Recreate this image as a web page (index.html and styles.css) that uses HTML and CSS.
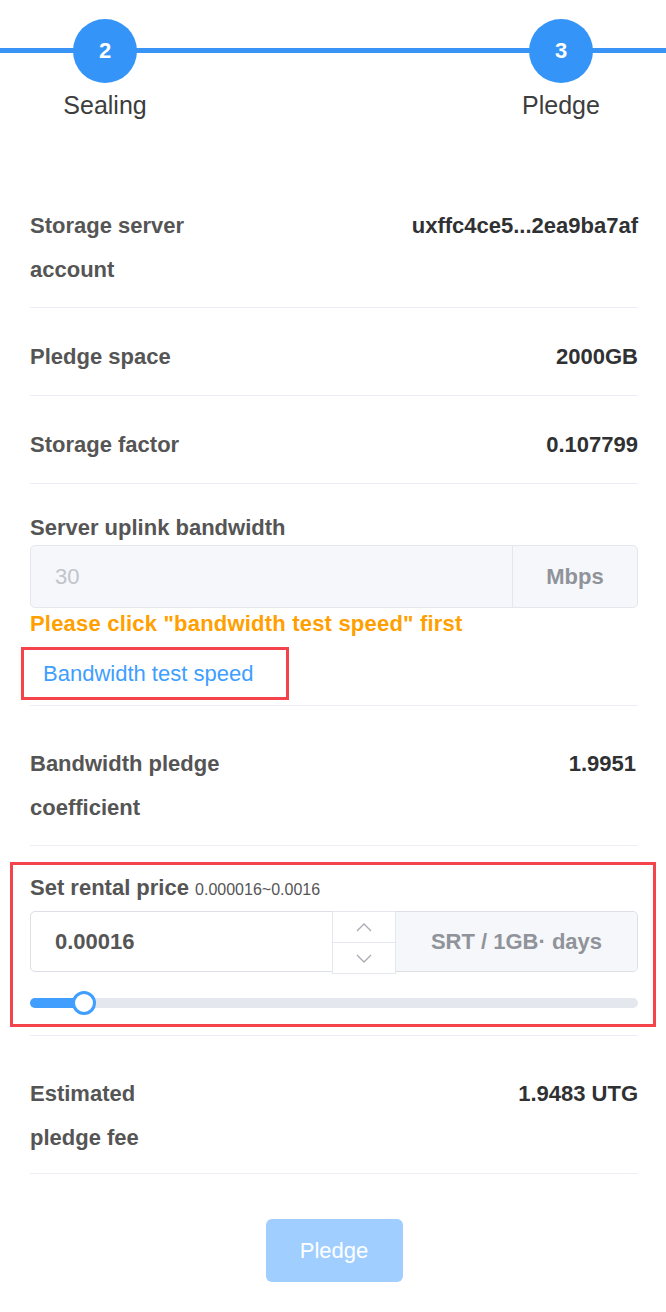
FILE: index.html
```html
<!DOCTYPE html>
<html lang="en">
<head>
<meta charset="utf-8">
<title>Pledge</title>
<link rel="stylesheet" href="styles.css">
</head>
<body>
<div class="page">
  <div class="steps">
    <div class="step">
      <div class="step-dot">2</div>
      <div class="step-name">Sealing</div>
    </div>
    <div class="step">
      <div class="step-dot">3</div>
      <div class="step-name">Pledge</div>
    </div>
  </div>

  <div class="content">
    <div class="row row-double">
      <div class="label">Storage server<br>account</div>
      <div class="value">uxffc4ce5...2ea9ba7af</div>
    </div>
    <div class="row row-single">
      <div class="label">Pledge space</div>
      <div class="value">2000GB</div>
    </div>
    <div class="row row-single">
      <div class="label">Storage factor</div>
      <div class="value">0.107799</div>
    </div>

    <div class="row row-bandwidth">
      <div class="field-label">Server uplink bandwidth</div>
      <div class="input-group disabled">
        <div class="input-main">30</div>
        <div class="input-append append-mbps">Mbps</div>
      </div>
      <div class="warning">Please click "bandwidth test speed" first</div>
      <div class="test-btn">Bandwidth test speed</div>
    </div>

    <div class="row row-double">
      <div class="label">Bandwidth pledge<br>coefficient</div>
      <div class="value value-coef">1.9951</div>
    </div>

    <div class="row row-rental">
      <div class="rental-box">
        <div class="field-label rental-label">Set rental price <span class="range">0.000016~0.0016</span></div>
        <div class="input-group rental-input">
          <div class="input-main number">0.00016</div>
          <div class="spin">
            <div class="spin-btn">
              <svg width="16" height="9" viewBox="0 0 16 9"><polyline points="1,8 8,1 15,8" fill="none" stroke="#a8abb2" stroke-width="1.3"/></svg>
            </div>
            <div class="spin-btn">
              <svg width="16" height="9" viewBox="0 0 16 9"><polyline points="1,1 8,8 15,1" fill="none" stroke="#a8abb2" stroke-width="1.3"/></svg>
            </div>
          </div>
          <div class="input-append append-unit">SRT / 1GB· days</div>
        </div>
        <div class="slider">
          <div class="slider-track">
            <div class="slider-fill" style="width: 54px"></div>
            <div class="slider-thumb" style="left: 54px"></div>
          </div>
        </div>
      </div>
    </div>

    <div class="row row-double row-last">
      <div class="label">Estimated<br>pledge fee</div>
      <div class="value">1.9483 UTG</div>
    </div>

    <div class="actions">
      <div class="pledge-btn">Pledge</div>
    </div>
  </div>
</div>
</body>
</html>
```

FILE: styles.css
```css
* {
  box-sizing: border-box;
}

html, body {
  margin: 0;
  padding: 0;
  background: #ffffff;
}

body {
  font-family: "Liberation Sans", Arial, sans-serif;
  color: #555555;
}

.page {
  width: 666px;
}

/* Steps */
.steps {
  height: 167px;
  display: flex;
  justify-content: space-between;
  padding: 0 41px;
  background: linear-gradient(to bottom, transparent 0, transparent 48px, #3a94f6 48px, #3a94f6 53px, transparent 53px) no-repeat;
}

.step {
  width: 128px;
  display: flex;
  flex-direction: column;
  align-items: center;
}

.step-dot {
  width: 64px;
  height: 64px;
  margin-top: 19px;
  border-radius: 50%;
  background: #3494f7;
  color: #ffffff;
  font-weight: bold;
  font-size: 22px;
  display: flex;
  align-items: center;
  justify-content: center;
}

.step-name {
  margin-top: 5px;
  font-size: 25px;
  line-height: 34px;
  color: #3d3d3d;
}

/* Content rows */
.content {
  padding: 0 28px 0 30px;
}

.row {
  border-bottom: 1px solid #ebeef5;
}

.row-single,
.row-double {
  display: flex;
  justify-content: space-between;
  align-items: flex-start;
  font-size: 22px;
  line-height: 44px;
  font-weight: bold;
}

.row-single {
  padding: 27px 0 16px;
}

.row-double {
  padding: 36px 0 15px;
}

.row-double:first-child {
  padding-top: 37px;
}

.row-last {
  padding: 36px 0 13px;
}

.label {
  color: #555555;
}

.value {
  color: #303133;
  text-align: right;
}

.value-coef {
  margin-right: 2px;
}

/* Bandwidth section */
.row-bandwidth {
  padding: 27px 0 5px;
}

.field-label {
  font-size: 22px;
  line-height: 34px;
  font-weight: bold;
  color: #555555;
}

.input-group {
  display: flex;
  height: 63px;
  border: 1px solid #dcdfe6;
  border-radius: 5px;
  background: #ffffff;
  font-size: 22px;
}

.input-group.disabled {
  background: #f5f7fa;
  border-color: #e4e7ed;
}

.input-group.rental-input {
  height: 61px;
}

.input-main {
  flex: 1;
  display: flex;
  align-items: center;
  padding-left: 24px;
}

.disabled .input-main {
  color: #c0c4cc;
}

.input-main.number {
  color: #555555;
  font-weight: bold;
}

.input-append {
  display: flex;
  align-items: center;
  justify-content: center;
  background: #f5f7fa;
  border-left: 1px solid #e4e7ed;
  color: #909399;
  font-weight: bold;
  border-radius: 0 5px 5px 0;
}

.append-mbps {
  width: 125px;
}

.append-unit {
  width: 241px;
  border-left: none;
}

.warning {
  font-size: 22px;
  line-height: 32px;
  font-weight: bold;
  color: #ff9f00;
  letter-spacing: 0.2px;
}

.test-btn {
  margin: 7px 0 0 -9px;
  width: 268px;
  height: 53px;
  border: 3px solid #f5434b;
  padding-left: 19px;
  display: flex;
  align-items: center;
  font-size: 22px;
  color: #409eff;
}

/* Rental */
.row-rental {
  padding: 16px 0 8px;
}

.rental-box {
  margin: 0 -18px 0 -20px;
  border: 3px solid #f5434b;
  padding: 5px 15px 16px 17px;
}

.rental-label {
  line-height: 36px;
  margin-bottom: 3px;
}

.range {
  font-size: 16px;
  font-weight: normal;
}

.spin {
  width: 64px;
  display: flex;
  flex-direction: column;
  margin: -1px 0 -3px;
  border: 1px solid #e4e7ed;
  background: #ffffff;
}

.spin-btn {
  flex: 1;
  display: flex;
  align-items: center;
  justify-content: center;
}

.spin-btn + .spin-btn {
  border-top: 1px solid #e4e7ed;
}

.slider {
  margin-top: 26px;
}

.slider-track {
  position: relative;
  height: 10px;
  border-radius: 5px;
  background: #e4e7ed;
}

.slider-fill {
  height: 10px;
  border-radius: 5px 0 0 5px;
  background: #409eff;
}

.slider-thumb {
  position: absolute;
  top: -7px;
  width: 24px;
  height: 24px;
  margin-left: -12px;
  border-radius: 50%;
  border: 3px solid #409eff;
  background: #ffffff;
}

/* Button */
.actions {
  display: flex;
  justify-content: center;
  padding-top: 45px;
  padding-bottom: 29px;
}

.pledge-btn {
  width: 137px;
  height: 63px;
  border-radius: 6px;
  background: #a0cfff;
  color: #ffffff;
  font-size: 22px;
  display: flex;
  align-items: center;
  justify-content: center;
}
```
